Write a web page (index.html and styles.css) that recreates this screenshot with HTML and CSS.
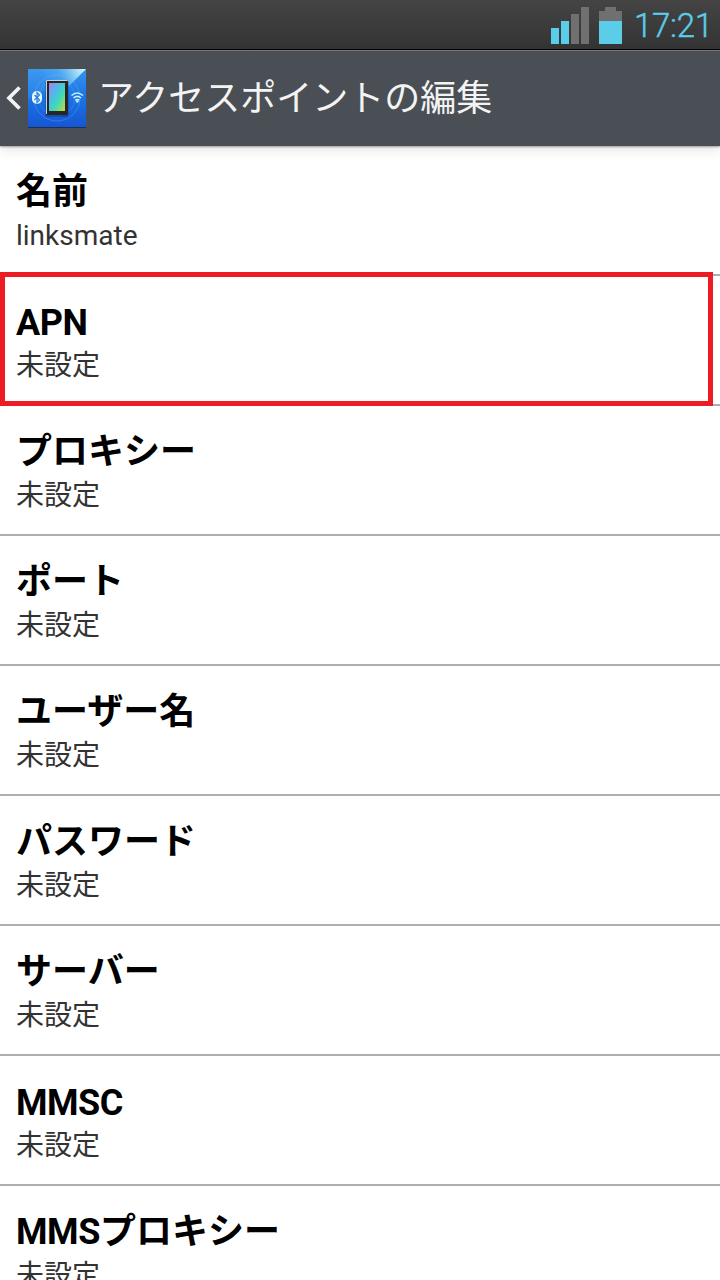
FILE: index.html
```html
<!DOCTYPE html>
<html lang="ja">
<head>
    <meta charset="UTF-8">
    <meta name="viewport" content="width=device-width, initial-scale=1.0">
    <title>アクセスポイントの編集</title>
    <link rel="stylesheet" href="styles.css">
</head>
<body>
    <div class="status-bar">
        <svg class="signal" width="38" height="37" viewBox="0 0 38 37">
            <path fill="#5ccde8" d="M0 21h8v16H0zM10 14h8v23h-8z"/>
            <path fill="#707070" d="M20 7h8v30h-8zM30 0h8v37h-8z"/>
        </svg>
        <svg class="battery" width="23" height="37" viewBox="0 0 23 37">
            <path fill="#707070" d="M6 0h11v4h6v10H0V4h6z"/>
            <path fill="#5ccde8" d="M0 14h23v23H0z"/>
        </svg>
        <span class="clock">17:21</span>
    </div>

    <div class="action-bar">
        <svg class="back" width="16" height="24" viewBox="0 0 16 24">
            <path d="M14.500 1.500L4 12l10.500 10.500" fill="none" stroke="#f3f3f3" stroke-width="3.800"/>
        </svg>
        <svg class="app-icon" width="60" height="60" viewBox="0 0 60 60">
            <defs>
                <linearGradient id="bg" x1="0" y1="0" x2="0" y2="1">
                    <stop offset="0" stop-color="#3593ee"/>
                    <stop offset="0.5" stop-color="#1b74e4"/>
                    <stop offset="1" stop-color="#1556d4"/>
                </linearGradient>
                <linearGradient id="shine" gradientUnits="userSpaceOnUse" x1="59" y1="1" x2="18" y2="18">
                    <stop offset="0" stop-color="#e4fbf8"/>
                    <stop offset="0.25" stop-color="#a5e0f5" stop-opacity="0.9"/>
                    <stop offset="0.600" stop-color="#62baf5" stop-opacity="0.5"/>
                    <stop offset="1" stop-color="#55aef5" stop-opacity="0.2"/>
                </linearGradient>
                <linearGradient id="screen" x1="0" y1="0" x2="1" y2="1">
                    <stop offset="0" stop-color="#b57be8"/>
                    <stop offset="0.3" stop-color="#55b4ee"/>
                    <stop offset="0.6" stop-color="#3cd8c0"/>
                    <stop offset="1" stop-color="#c8dc38"/>
                </linearGradient>
            </defs>
            <rect x="1" y="2" width="58" height="58" fill="#20304c"/>
            <rect x="1" y="1" width="58" height="58" fill="url(#bg)"/>
            <path d="M1 1h58L41 19Q16 20 1 32z" fill="url(#shine)"/>
            <circle cx="30" cy="30" r="23" fill="none" stroke="#6cb4fa" opacity="0.35"/>
            <circle cx="30" cy="30" r="18" fill="none" stroke="#6cb4fa" opacity="0.25"/>
            <rect x="18.500" y="13" width="23" height="36" rx="1.500" fill="#0b3c96" opacity="0.600"/>
            <rect x="19" y="12" width="22" height="35" rx="1.500" fill="#2a2525"/>
            <path d="M19.500 46V12.500h21" fill="none" stroke="#c9d3d8"/>
            <rect x="22" y="15" width="16" height="28" fill="url(#screen)"/>
            <path d="M27 13.500h6" stroke="#222"/>
            <rect x="5" y="23" width="10" height="13" rx="5" fill="#e4f7ff"/>
            <path d="M7.500 27l5 5-2.500 2.500v-10l2.500 2.500-5 5" fill="none" stroke="#2a7fe0" stroke-width="1.200"/>
            <path d="M44.500 27.500q5.500-5 11.500 0M46.500 30q3.700-3.200 7.500 0M48.300 32.300q2-1.600 4 0" fill="none" stroke="#c6efff" stroke-width="1.500"/>
            <circle cx="50.300" cy="33.500" r="1.200" fill="#c6efff"/>
        </svg>
        <h1>アクセスポイントの編集</h1>
    </div>

    <ul class="settings">
        <li>
            <div class="name">名前</div>
            <div class="value">linksmate</div>
        </li>
        <li class="highlight">
            <div class="name latin">APN</div>
            <div class="value">未設定</div>
        </li>
        <li>
            <div class="name">プロキシー</div>
            <div class="value">未設定</div>
        </li>
        <li>
            <div class="name">ポート</div>
            <div class="value">未設定</div>
        </li>
        <li>
            <div class="name">ユーザー名</div>
            <div class="value">未設定</div>
        </li>
        <li>
            <div class="name">パスワード</div>
            <div class="value">未設定</div>
        </li>
        <li>
            <div class="name">サーバー</div>
            <div class="value">未設定</div>
        </li>
        <li>
            <div class="name latin">MMSC</div>
            <div class="value">未設定</div>
        </li>
        <li>
            <div class="name"><span class="mms">MMS</span>プロキシー</div>
            <div class="value">未設定</div>
        </li>
    </ul>
</body>
</html>
```
FILE: styles.css
```css
*, *::after {
    box-sizing: border-box;
}

body {
    margin: 0;
    height: 1280px;
    overflow: hidden;
    background: #fff;
    font-family: Roboto, "Noto Sans CJK JP", sans-serif;
}

.status-bar {
    display: flex;
    justify-content: flex-end;
    height: 50px;
    padding: 7px 9px 0 0;
    background: linear-gradient(#444, #343434);
    border-bottom: 1px solid #000;
}

.battery {
    margin: 0 12px 0 10px;
}

.clock {
    width: 77px;
    color: #5ccde8;
    font-size: 33px;
    line-height: 37px;
    font-weight: 300;
    letter-spacing: -0.3px;
    white-space: nowrap;
    -webkit-text-stroke: 0.4px #5ccde8;
}

.action-bar {
    display: flex;
    align-items: center;
    height: 96px;
    padding: 0 0 1px 5px;
    background: #4a4e55;
    border-top: 1px solid #73777c;
    box-shadow: 0 1px 2px rgba(0, 0, 0, 0.35), 0 4px 12px rgba(0, 0, 0, 0.1);
}

.app-icon {
    margin: 0 11px 0 6px;
}

h1 {
    margin: 0;
    padding-top: 2px;
    color: #f3f3f3;
    font-size: 36px;
    font-weight: 400;
    line-height: 50px;
}

.settings {
    list-style: none;
    margin: 0;
    padding: 0;
}

.settings li {
    height: 130px;
    padding: 22px 16px 0;
    border-bottom: 2px solid #abafb4;
}

.name {
    height: 48px;
    color: #000;
    font-size: 36px;
    font-weight: 700;
    line-height: 48px;
}

.latin {
    padding-top: 1px;
    letter-spacing: -0.5px;
}

.mms {
    letter-spacing: -0.4px;
}

.value {
    color: #333;
    font-size: 28px;
    line-height: 40px;
}

.highlight {
    position: relative;
}

/* red frame around the APN row, covers both dividers */
.highlight::after {
    content: "";
    position: absolute;
    top: -4px;
    left: 0;
    width: 713px;
    height: 134px;
    border: 5px solid #ed1c24;
}
```
